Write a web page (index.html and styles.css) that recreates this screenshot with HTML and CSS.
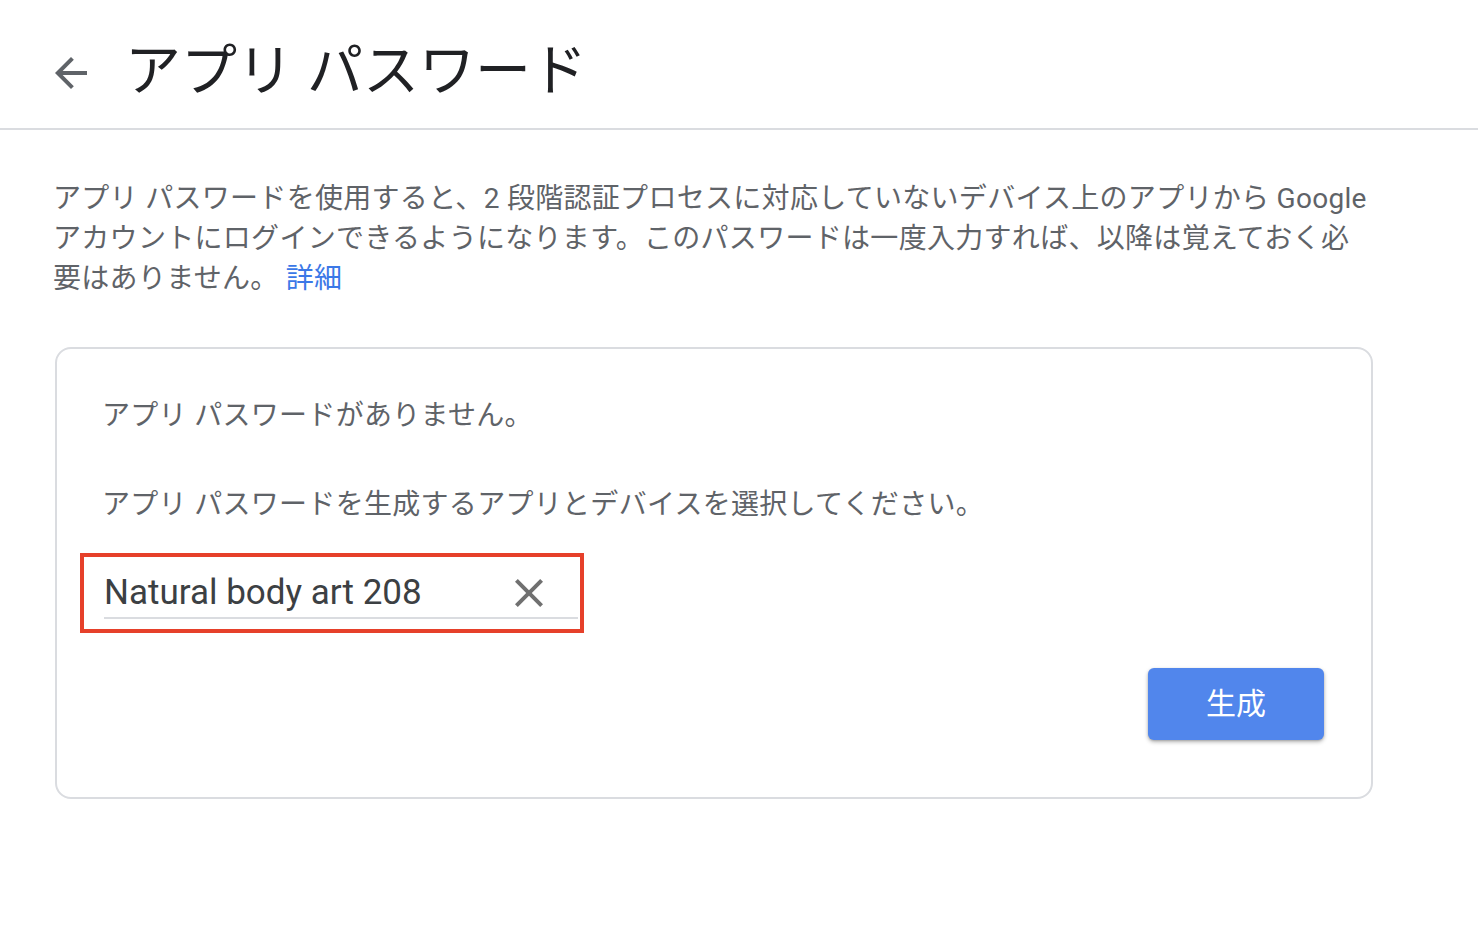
FILE: index.html
```html
<!DOCTYPE html>
<html lang="ja">
<head>
<meta charset="utf-8">
<title>アプリ パスワード</title>
<link rel="stylesheet" href="styles.css">
</head>
<body>
<header class="topbar">
  <a class="back" href="#" aria-label="戻る">
    <svg viewBox="0 0 24 24" width="48" height="48"><path d="M20 11H7.83l5.59-5.59L12 4l-8 8 8 8 1.41-1.41L7.83 13H20v-2z" fill="#5f6368"/></svg>
  </a>
  <h1 class="title">アプリ パスワード</h1>
</header>
<main class="content">
  <p class="intro">アプリ パスワードを使用すると、2 段階認証プロセスに対応していないデバイス上のアプリから Google アカウントにログインできるようになります。このパスワードは一度入力すれば、以降は覚えておく必要はありません。 <a class="link" href="#">詳細</a></p>
  <section class="card">
    <p class="card-text">アプリ パスワードがありません。</p>
    <p class="card-text second">アプリ パスワードを生成するアプリとデバイスを選択してください。</p>
    <div class="highlight">
      <div class="field">
        <span class="field-value">Natural body art 208</span>
        <svg class="clear" viewBox="0 0 24 24" width="48" height="48"><path d="M19 6.41L17.59 5 12 10.59 6.41 5 5 6.41 10.59 12 5 17.59 6.41 19 12 13.41 17.59 19 19 17.59 13.41 12z" fill="#707070"/></svg>
      </div>
    </div>
    <div class="actions">
      <button class="btn" type="button">生成</button>
    </div>
  </section>
</main>
</body>
</html>
```

FILE: styles.css
```css
* { box-sizing: border-box; }
html, body { margin: 0; padding: 0; background: #fff; }
body {
  font-family: "Roboto", "Noto Sans CJK JP", sans-serif;
  color: #5f6368;
}
.topbar {
  height: 130px;
  padding-top: 14px;
  border-bottom: 2px solid #dadce0;
  display: flex;
  align-items: center;
}
.back {
  display: flex;
  width: 48px;
  height: 48px;
  margin-left: 47px;
  margin-top: 4px;
}
.title {
  margin: 0 0 0 30px;
  font-weight: 400;
  font-size: 56px;
  line-height: 64px;
  color: #202124;
}
.content {
  padding-left: 55px;
  width: 1373px;
}
.intro {
  margin: 49px 0 0 -2px;
  font-size: 28px;
  line-height: 40px;
  letter-spacing: 0.3px;
  color: #5f6368;
}
.link { color: #3b78e7; text-decoration: none; }
.card {
  margin-top: 48px;
  border: 2px solid #dadce0;
  border-radius: 16px;
  padding: 47px 47px 57px;
}
.card-text {
  margin: 0 0 0 -2px;
  font-size: 28px;
  line-height: 40px;
  letter-spacing: 0.3px;
  color: #5f6368;
}
.card-text.second { margin-top: 49px; }
.highlight {
  margin-top: 28px;
  margin-left: -24px;
  width: 504px;
  border: 4px solid #e6402a;
  padding: 10px 2px 10px 20px;
}
.field {
  display: flex;
  align-items: center;
  justify-content: space-between;
  height: 52px;
  padding-top: 2px;
  border-bottom: 2px solid #dadce0;
}
.field-value {
  font-size: 35px;
  line-height: 48px;
  color: #3c4043;
}
.clear { margin-right: 25px; }
.actions {
  margin-top: 35px;
  display: flex;
  justify-content: flex-end;
}
.btn {
  width: 176px;
  height: 72px;
  padding: 0 0 6px;
  border: none;
  border-radius: 6px;
  background: #5186ec;
  color: #fff;
  font-family: "Roboto", "Noto Sans CJK JP", sans-serif;
  font-size: 30px;
  box-shadow: 0 2px 4px rgba(0,0,0,0.28), 0 1px 2px rgba(0,0,0,0.15);
  cursor: pointer;
}
```
